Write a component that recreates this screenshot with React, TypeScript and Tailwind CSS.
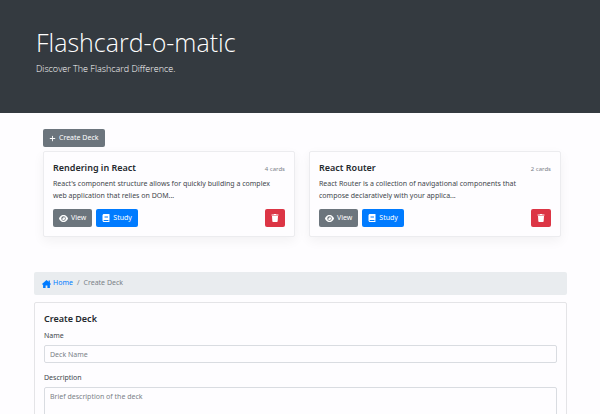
import React from "react";
import { FaBook, FaTrash } from "react-icons/fa";
import { FaEye, FaPlus } from "react-icons/fa6";

type Deck = { name: string; count: number; description: string };

const decks: Deck[] = [
  {
    name: "Rendering in React",
    count: 4,
    description:
      "React's component structure allows for quickly building a complex web application that relies on DOM...",
  },
  {
    name: "React Router",
    count: 2,
    description:
      "React Router is a collection of navigational components that compose declaratively with your applica...",
  },
];

const button =
  "flex h-[18px] items-center gap-[3px] rounded-[2px] px-[6px] text-[7px] text-white";

function HomeIcon() {
  return (
    <svg viewBox="0 0 18 16" fill="currentColor" className="h-[8px] w-[9px]" aria-hidden="true">
      <path d="M9 0 0 8v1h2.2v7h5v-5h3.6v5h5V9H18V8l-2.2-2V1h-2.6v2.7z" />
    </svg>
  );
}

function DeckCard({ deck }: { deck: Deck }) {
  return (
    <article className="rounded-[2px] border border-[#ececef] bg-[#fefdff] px-[9px] py-[9px] shadow-[0_4px_12px_rgba(0,0,0,0.05)]">
      <div className="flex items-center justify-between">
        <h2 className="text-[9px] leading-[14px] font-semibold">{deck.name}</h2>
        <small className="pt-[2px] text-[6px] leading-[12px] text-[#7b8288]">{deck.count} cards</small>
      </div>
      <p className="mt-[3px] pr-[8px] text-[7px] leading-[12px] text-[#42474c]">{deck.description}</p>
      <div className="mt-[7px] flex gap-[4px]">
        <button type="button" className={`${button} bg-[#6c757d]`}>
          <FaEye className="size-[9px]" />
          View
        </button>
        <button type="button" className={`${button} bg-[#007bff]`}>
          <FaBook className="size-[8px]" />
          Study
        </button>
        <button type="button" aria-label="Delete deck" className={`${button} ml-auto bg-[#dc3545]`}>
          <FaTrash className="size-[8px]" />
        </button>
      </div>
    </article>
  );
}

export default function App() {
  return (
    <div className="h-screen overflow-hidden bg-[#fefdff] font-['Noto_Sans',sans-serif] text-[#24292e]">
      <header className="bg-[#343a40] px-[36px] pt-[24px] pb-[37px] text-white">
        <h1 className="font-['Open_Sans',sans-serif] text-[25px] leading-[36px] font-light">Flashcard-o-matic</h1>
        <p className="mt-px font-['Open_Sans',sans-serif] text-[9px] leading-[15px] font-light">
          Discover The Flashcard Difference.
        </p>
      </header>
      <main className="pr-[33px] pl-[34px]">
        <section className="pt-[16px] pr-[6px] pl-[9px]">
          <button type="button" className={`${button} bg-[#6c757d]`}>
            <FaPlus className="size-[7px]" />
            Create Deck
          </button>
          <div className="mt-[4px] grid grid-cols-2 gap-[14px]">
            {decks.map((deck) => (
              <DeckCard key={deck.name} deck={deck} />
            ))}
          </div>
        </section>
        <nav
          aria-label="Breadcrumb"
          className="mt-[35px] flex h-[23px] items-center gap-[4px] rounded-[2px] bg-[#e9ecef] px-[8px] text-[7px] text-[#7b8288]"
        >
          <a href="#home" className="flex items-center gap-[2px] text-[#007bff]">
            <HomeIcon />
            Home
          </a>
          <span>/</span>
          <span>Create Deck</span>
        </nav>
        <form className="mt-[7px] rounded-[2px] border border-[#e4e4e7] px-[9px] pt-[9px] pb-[12px]">
          <h2 className="text-[9px] leading-[14px] font-semibold">Create Deck</h2>
          <label htmlFor="name" className="mt-[4px] block text-[7px] leading-[12px] text-[#42474c]">
            Name
          </label>
          <input
            id="name"
            placeholder="Deck Name"
            className="mt-[3px] block h-[18px] w-full rounded-[2px] border border-[#d9dce1] px-[5px] text-[7px] placeholder:text-[#7b8288]"
          />
          <label htmlFor="description" className="mt-[9px] block text-[7px] leading-[12px] text-[#42474c]">
            Description
          </label>
          <textarea
            id="description"
            placeholder="Brief description of the deck"
            className="mt-[3px] block h-[54px] w-full resize-none rounded-[2px] border border-[#d9dce1] px-[5px] py-[3px] text-[7px] leading-[12px] placeholder:text-[#7b8288]"
          />
        </form>
      </main>
    </div>
  );
}
